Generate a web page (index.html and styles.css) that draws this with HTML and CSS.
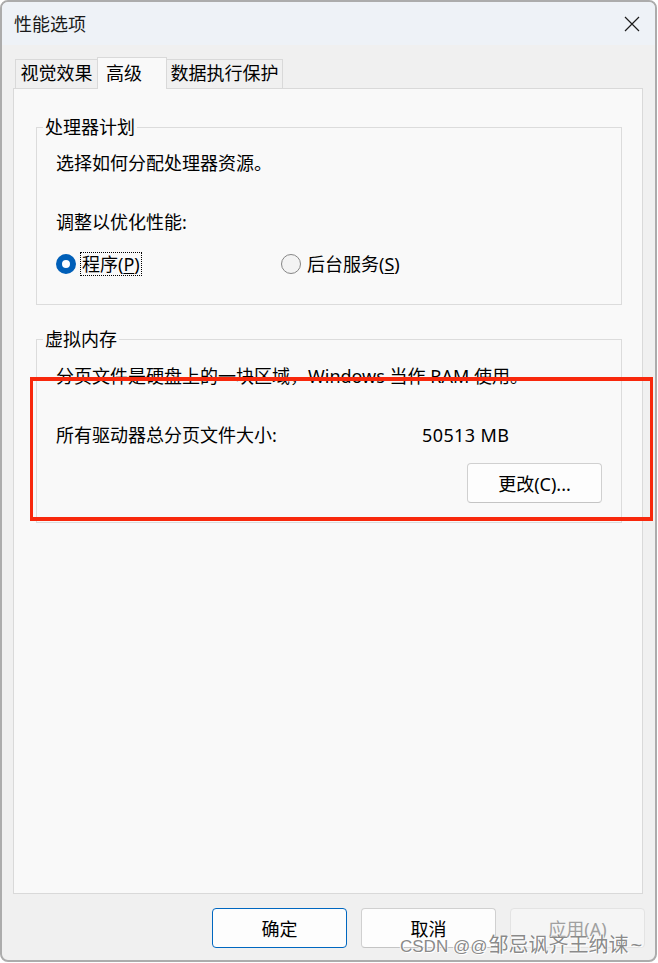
FILE: index.html
```html
<!DOCTYPE html>
<html lang="zh-CN">
<head>
<meta charset="utf-8">
<title>性能选项</title>
<link rel="stylesheet" href="styles.css">
</head>
<body>
<div class="window">
  <div class="titlebar">
    <span class="title">性能选项</span>
    <button class="close" aria-label="关闭">
      <svg width="16" height="16" viewBox="0 0 16 16"><path d="M1 1 L15 15 M15 1 L1 15" stroke="#1b1b1b" stroke-width="1.2" fill="none"/></svg>
    </button>
  </div>
  <div class="client">
    <div class="tabs">
      <div class="tab t1">视觉效果</div>
      <div class="tab t2">高级</div>
      <div class="tab t3">数据执行保护</div>
    </div>
    <div class="panel">
      <fieldset class="group g1">
        <legend>处理器计划</legend>
        <div class="group-body b1">
          <p class="line l1">选择如何分配处理器资源。</p>
          <p class="line l2">调整以优化性能:</p>
          <div class="radios">
            <div class="option opt1">
              <span class="radio checked"></span>
              <span class="label focus">程序(<u>P</u>)</span>
            </div>
            <div class="option">
              <span class="radio"></span>
              <span class="label">后台服务(<u>S</u>)</span>
            </div>
          </div>
        </div>
      </fieldset>
      <fieldset class="group g2">
        <legend>虚拟内存</legend>
        <div class="group-body b2">
          <p class="line v1">分页文件是硬盘上的一块区域，Windows 当作 RAM 使用。</p>
          <div class="line v2">
            <span class="v2-label">所有驱动器总分页文件大小:</span>
            <span class="v2-value">50513 MB</span>
          </div>
          <div class="change-row">
            <button class="btn">更改(C)...</button>
          </div>
        </div>
      </fieldset>
    </div>
    <div class="actions">
      <button class="btn primary">确定</button>
      <button class="btn">取消</button>
      <button class="btn disabled">应用(A)</button>
    </div>
  </div>
  <div class="watermark"><span class="wm-latin">CSDN @@</span>邹忌讽齐王纳谏<span class="wm-tilde">~</span></div>
</div>
<div class="highlight"></div>
</body>
</html>
```
FILE: styles.css
```css
html, body {
  margin: 0;
  padding: 0;
  background: #ffffff;
}
body {
  font-family: "Noto Sans", "Noto Sans CJK SC", sans-serif;
  font-size: 18px;
  color: #000;
}
.window {
  position: relative;
  width: 657px;
  height: 962px;
  box-sizing: border-box;
  border: 2px solid #acacac;
  border-radius: 8px;
  background: #f0f0f0;
  overflow: hidden;
}
.titlebar {
  height: 43px;
  background: #eef2f7;
  display: flex;
  align-items: center;
  justify-content: space-between;
  padding-left: 12px;
}
.title {
  line-height: 24px;
  color: #1a1a1a;
}
.close {
  width: 46px;
  height: 43px;
  border: 0;
  padding: 0;
  background: transparent;
  display: flex;
  align-items: center;
  justify-content: center;
}
.client {
  padding: 12px 10px 0 11px;
}
.tabs {
  display: flex;
  align-items: flex-end;
  margin-left: 2px;
}
.tab {
  box-sizing: border-box;
  height: 29px;
  border: 1px solid #d9d9d9;
  border-bottom: 0;
  background: #f0f0f0;
  line-height: 27px;
  text-align: center;
  white-space: nowrap;
}
.t1 { width: 83px; }
.t2 {
  width: 70px;
  height: 32px;
  margin-left: -1px;
  margin-bottom: -1px;
  background: #f9f9f9;
  position: relative;
  z-index: 1;
  text-align: left;
  padding-left: 8px;
  line-height: 30px;
}
.t3 { width: 117px; margin-left: -1px; }
.panel {
  box-sizing: border-box;
  width: 630px;
  height: 806px;
  border: 1px solid #d9d9d9;
  background: #f9f9f9;
  padding: 0 20px 0 22px;
}
.group {
  margin: 0;
  border: 1px solid #dcdcdc;
  padding: 0 0 0 6px;
  min-width: 0;
}
.group legend {
  padding: 0 2px;
  line-height: 24px;
}
.g1 { margin-top: 26px; }
.g2 { margin-top: 22px; }
.group-body {
  padding: 0 19px 0 13px;
}
.b1 { padding-bottom: 28px; }
.b2 { padding-bottom: 19px; }
.line {
  margin: 0;
  line-height: 24px;
  white-space: nowrap;
}
.l1 { margin-top: 12px; }
.l2 { margin-top: 35px; }
.radios {
  margin-top: 18px;
  display: flex;
  align-items: center;
  height: 24px;
}
.option {
  display: flex;
  align-items: center;
  gap: 4px;
}
.opt1 { width: 225px; }
.radio {
  box-sizing: border-box;
  width: 20px;
  height: 20px;
  border-radius: 50%;
  border: 1px solid #868686;
  background: #f3f3f3;
}
.radio.checked {
  border: 6px solid #005fb8;
  background: #ffffff;
}
.label {
  border: 1px solid transparent;
  padding: 0 1px;
  line-height: 22px;
}
.label.focus {
  border: 1px dotted #000;
}
.label u {
  text-underline-offset: 2px;
}
.v1 { margin-top: 13px; }
.v2 {
  margin-top: 35px;
  display: flex;
}
.v2-label { width: 366px; }
.v2-value { letter-spacing: 0.4px; }
.change-row {
  display: flex;
  justify-content: flex-end;
  margin-top: 16px;
}
.btn {
  box-sizing: border-box;
  width: 135px;
  height: 40px;
  border: 1px solid #d0d0d0;
  border-bottom-color: #c4c4c4;
  border-radius: 4px;
  background: #fdfdfd;
  font-family: inherit;
  font-size: 18px;
  color: #000;
  padding: 0;
}
.actions {
  display: flex;
  justify-content: flex-end;
  gap: 14px;
  margin-top: 14px;
}
.btn.primary {
  border-color: #0067c0;
}
.btn.disabled {
  background: #f5f5f5;
  border-color: #e3e3e3;
  color: #a0a0a0;
}
.watermark {
  position: absolute;
  left: 398px;
  top: 928px;
  font-family: "Noto Sans CJK SC", sans-serif;
  font-size: 20px;
  line-height: 28px;
  color: #8a8a8a;
  white-space: nowrap;
  text-shadow: -1px 0 0 #fff, 1px 1px 0 #fff;
}
.wm-latin {
  font-family: "Liberation Sans", sans-serif;
  font-size: 17px;
  margin-right: 1px;
}
.wm-tilde {
  font-family: "Liberation Sans", sans-serif;
  font-size: 20px;
  margin-left: 2px;
}
.highlight {
  position: absolute;
  left: 30px;
  top: 377px;
  width: 623px;
  height: 144px;
  box-sizing: border-box;
  border-style: solid;
  border-color: #f8280c;
  border-width: 4px 3px;
}
```
